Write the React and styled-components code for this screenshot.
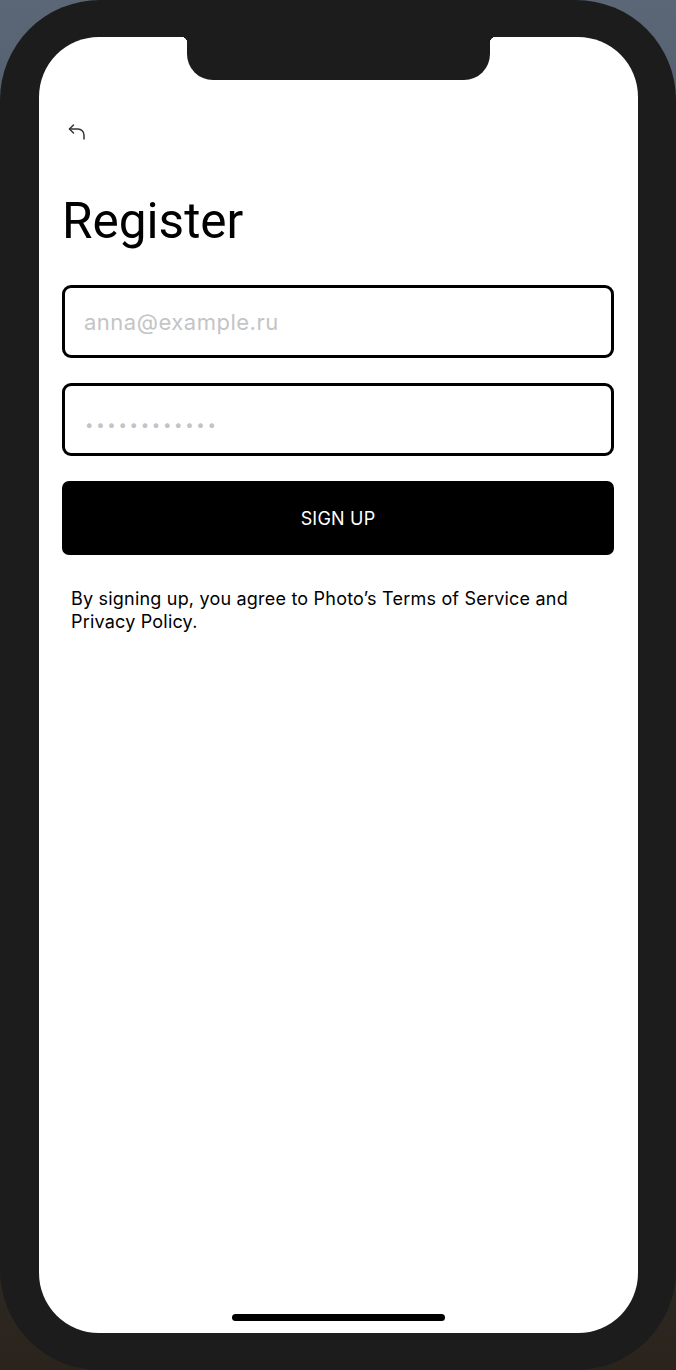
import styled, { createGlobalStyle } from "styled-components";

const GlobalStyle = createGlobalStyle`
  html, body {
    margin: 0;
    padding: 0;
  }
  body {
    background: linear-gradient(180deg, #5b6777 0%, #3b4149 45%, #2b241d 100%);
    font-family: Inter, Roboto, "Liberation Sans", sans-serif;
  }
`;

const Frame = styled.div`
  width: 676px;
  height: 1370px;
  box-sizing: border-box;
  padding: 37px 38px 37px 39px;
  background: #1c1c1c;
  border-radius: 100px;
  display: flex;
`;

const Screen = styled.div`
  position: relative;
  flex: 1;
  background: #ffffff;
  border-radius: 60px;
  overflow: hidden;
  display: flex;
  flex-direction: column;
`;

const Notch = styled.div`
  position: absolute;
  top: 0;
  left: 148px;
  width: 303px;
  height: 43px;
  background: #1c1c1c;
  border-radius: 0 0 26px 26px;

  &::before,
  &::after {
    content: "";
    position: absolute;
    top: 0;
    width: 6px;
    height: 6px;
  }
  &::before {
    left: -6px;
    background: radial-gradient(circle at 0 100%, transparent 6px, #1c1c1c 6.5px);
  }
  &::after {
    right: -6px;
    background: radial-gradient(circle at 100% 100%, transparent 6px, #1c1c1c 6.5px);
  }
`;

const Content = styled.div`
  display: flex;
  flex-direction: column;
  padding: 85px 24px 0 23px;
`;

const BackButton = styled.button`
  width: 20px;
  height: 20px;
  padding: 0;
  margin-left: 5px;
  border: none;
  background: none;
  color: #333333;
  cursor: pointer;
  display: flex;
`;

const Title = styled.h1`
  margin: 50px 0 0;
  font-family: Roboto, "Liberation Sans", sans-serif;
  font-size: 49.5px;
  line-height: 58px;
  font-weight: 400;
  color: #000000;
`;

const Form = styled.form`
  display: flex;
  flex-direction: column;
  gap: 25px;
  margin-top: 35px;
`;

const Field = styled.input`
  height: 73px;
  box-sizing: border-box;
  border: 3px solid #000000;
  border-radius: 9px;
  padding: ${(p) => (p.type === "password" ? "10px 19px 0 20px" : "0 19px")};
  font-family: Inter, Roboto, "Liberation Sans", sans-serif;
  font-size: ${(p) => (p.type === "password" ? "15px" : "22px")};
  letter-spacing: ${(p) => (p.type === "password" ? "2.7px" : "0.5px")};
  color: #000000;
  outline: none;

  &::placeholder {
    color: #c4c4c6;
  }
`;

const SubmitButton = styled.button`
  height: 74px;
  border: none;
  border-radius: 7px;
  background: #000000;
  color: #ffffff;
  font-family: Inter, Roboto, "Liberation Sans", sans-serif;
  font-size: 18px;
  letter-spacing: 0.2px;
  cursor: pointer;
`;

const Terms = styled.p`
  margin: 32px 0 0 9px;
  font-size: 18px;
  line-height: 23px;
  letter-spacing: 0.2px;
  color: #000000;
`;

const HomeIndicator = styled.div`
  width: 213px;
  height: 7px;
  margin: auto auto 12px;
  border-radius: 4px;
  background: #000000;
`;

function BackIcon() {
  return (
    <svg width="20" height="20" viewBox="0 0 20 20" fill="none" stroke="currentColor" strokeWidth="1.5" strokeLinecap="round" strokeLinejoin="round">
      <path d="M6.5 3 2.5 7l4 4" />
      <path d="M2.5 7H11a6 6 0 0 1 6 6v4" />
    </svg>
  );
}

export default function App() {
  return (
    <>
      <GlobalStyle />
      <Frame>
        <Screen>
          <Notch />
          <Content>
            <BackButton aria-label="Back">
              <BackIcon />
            </BackButton>
            <Title>Register</Title>
            <Form onSubmit={(e) => e.preventDefault()}>
              <Field type="email" placeholder="anna@example.ru" />
              <Field type="password" placeholder="••••••••••••" />
              <SubmitButton type="submit">SIGN UP</SubmitButton>
            </Form>
            <Terms>
              By signing up, you agree to Photo’s Terms of Service and Privacy Policy.
            </Terms>
          </Content>
          <HomeIndicator />
        </Screen>
      </Frame>
    </>
  );
}
